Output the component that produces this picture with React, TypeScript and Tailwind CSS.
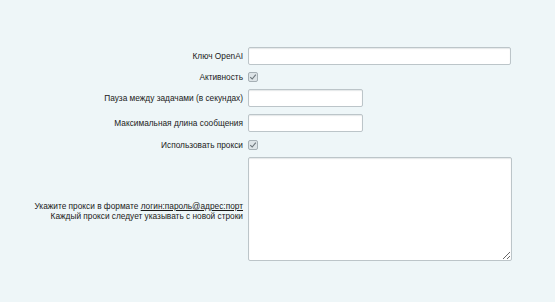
function Check() {
  return (
    <span className="flex h-[10px] w-[10px] items-center justify-center rounded-[2px] border border-[#a6b0b5] bg-[#dde4e7]">
      <svg width="8" height="8" viewBox="0 0 8 8" fill="none">
        <path d="M1.2 4.2 L3.2 6 L6.8 1.6" stroke="#6d777c" strokeWidth="1.1" />
      </svg>
    </span>
  );
}

function Label({ children }: { children: React.ReactNode }) {
  return <div className="text-right leading-[10px]">{children}</div>;
}

const inputCls =
  "h-[18px] rounded-[2px] border border-[#bcc5c9] bg-white shadow-[inset_0_1px_1px_rgba(180,188,191,0.35)] outline-none";

export default function App() {
  return (
    <div className="h-[302px] w-[555px] bg-[#eef6f8] font-['Liberation_Sans',Arial,sans-serif] text-[8.3px] text-[#1a1a1a]">
      <div className="grid grid-cols-[243px_1fr] items-center gap-x-[5px] gap-y-[7px] pt-[47px]">
        <Label>Ключ OpenAI</Label>
        <input className={`${inputCls} w-[263px]`} />

        <Label>Активность</Label>
        <div className="flex h-[10px]">
          <Check />
        </div>

        <Label>Пауза между задачами (в секундах)</Label>
        <input className={`${inputCls} w-[115px]`} />

        <Label>Максимальная длина сообщения</Label>
        <input className={`${inputCls} w-[115px]`} />

        <Label>Использовать прокси</Label>
        <div className="flex h-[11px] items-center">
          <Check />
        </div>

        <Label>
          <div className="pt-[4px]">
            Укажите прокси в формате <span className="underline">логин:пароль@адрес:порт</span>
          </div>
          <div>Каждый прокси следует указывать с новой строки</div>
        </Label>
        <textarea className="h-[104px] w-[264px] resize rounded-[2px] border border-[#bcc5c9] bg-white shadow-[inset_0_1px_1px_rgba(180,188,191,0.35)] outline-none" />
      </div>
    </div>
  );
}
